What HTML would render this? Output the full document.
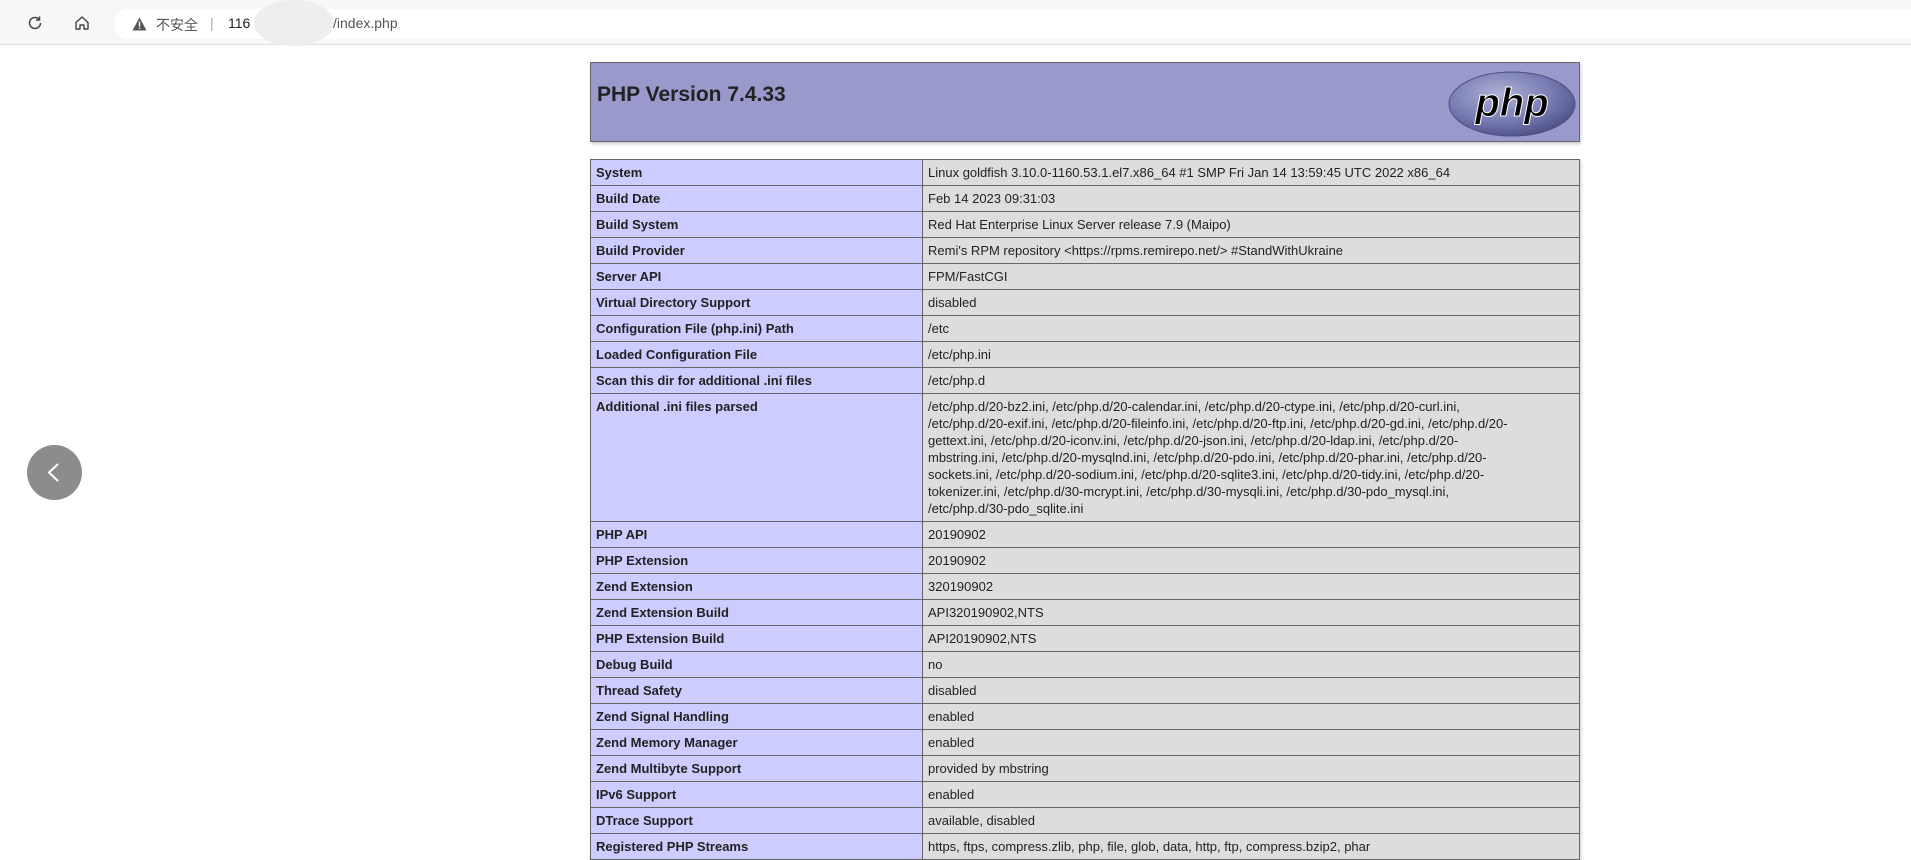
<!DOCTYPE html>
<html><head><meta charset="utf-8"><style>
html,body{margin:0;padding:0;width:1911px;height:851px;overflow:hidden;background:#fff;font-family:"Liberation Sans","Noto Sans CJK SC",sans-serif;}
.bar{position:absolute;left:0;top:0;width:1911px;height:44px;background:#f7f7f7;border-bottom:1px solid #e0e0e0;}
.pill{position:absolute;left:114px;top:9px;width:1820px;height:30px;background:#fff;border-radius:15px;}
.url{position:absolute;top:15px;font-size:14px;color:#333;}
.back{position:absolute;left:27px;top:445px;width:55px;height:55px;border-radius:50%;background:#8c8c8c;}
.hdr{position:absolute;left:590px;top:62px;width:988px;height:78px;background:#99c;border:1px solid #666;box-shadow:1px 2px 3px #ccc;}
.hdr h1{margin:0;position:absolute;left:6px;top:20px;font-size:21px;font-weight:bold;color:#222;}
table{position:absolute;left:590px;top:159px;width:990px;border-collapse:collapse;font-size:13px;color:#222;box-shadow:1px 2px 3px #ccc;}
td{border:1px solid #666;padding:4px 5px;line-height:17px;height:17px;vertical-align:top;white-space:nowrap;}
td.e{background:#ccf;font-weight:bold;width:321px;}
td.v{background:#ddd;}
</style></head><body>
<div class="bar">
<svg style="position:absolute;left:26px;top:14px" width="18" height="18" viewBox="0 0 18 18"><path d="M14.5 9a5.5 5.5 0 1 1-1.6-3.9" fill="none" stroke="#444" stroke-width="1.5"/><path d="M13.5 2.5v3.5h-3.5" fill="none" stroke="#444" stroke-width="1.5"/></svg>
<svg style="position:absolute;left:73px;top:14px" width="18" height="18" viewBox="0 0 18 18"><path d="M3 8.5L9 3l6 5.5V15h-4v-4H7v4H3z" fill="none" stroke="#444" stroke-width="1.4" stroke-linejoin="round"/></svg>
<div class="pill"></div>
<svg style="position:absolute;left:132px;top:17px" width="15" height="14" viewBox="0 0 15 14"><path d="M7.5 0.5L14.5 13.5H0.5z" fill="#555"/><rect x="6.8" y="4.5" width="1.4" height="5" fill="#fff"/><rect x="6.8" y="10.5" width="1.4" height="1.4" fill="#fff"/></svg>
<span class="url" style="left:156px;color:#555">不安全</span>
<span class="url" style="left:210px;color:#aaa">|</span>
<span class="url" style="left:228px;color:#222">116</span>
<div style="position:absolute;left:254px;top:0px;width:80px;height:46px;border-radius:50%;background:#eee;"></div>
<span class="url" style="left:333px;color:#555">/index.php</span>
</div>
<div class="back"><svg width="55" height="55" viewBox="0 0 55 55"><path d="M31 19l-9 8.5 9 8.5" fill="none" stroke="#fff" stroke-width="2"/></svg></div>
<div class="hdr"><h1>PHP Version 7.4.33</h1>
<svg style="position:absolute;left:856px;top:7px" width="130" height="68" viewBox="0 0 130 68"><defs><radialGradient id="g" cx="40%" cy="35%" r="70%"><stop offset="0" stop-color="#aeb2d5"/><stop offset="0.6" stop-color="#777bb3"/><stop offset="1" stop-color="#4c4f83"/></radialGradient></defs><ellipse cx="65" cy="34" rx="63" ry="32" fill="url(#g)" stroke="#4c4f83"/><text x="65" y="46" text-anchor="middle" font-family="Liberation Sans,sans-serif" font-style="italic" font-weight="bold" font-size="40" fill="#000" stroke="#fff" stroke-width="1">php</text></svg>
</div>
<table>
<tr><td class="e">System</td><td class="v">Linux goldfish 3.10.0-1160.53.1.el7.x86_64 #1 SMP Fri Jan 14 13:59:45 UTC 2022 x86_64</td></tr>
<tr><td class="e">Build Date</td><td class="v">Feb 14 2023 09:31:03</td></tr>
<tr><td class="e">Build System</td><td class="v">Red Hat Enterprise Linux Server release 7.9 (Maipo)</td></tr>
<tr><td class="e">Build Provider</td><td class="v">Remi's RPM repository &lt;https://rpms.remirepo.net/&gt; #StandWithUkraine</td></tr>
<tr><td class="e">Server API</td><td class="v">FPM/FastCGI</td></tr>
<tr><td class="e">Virtual Directory Support</td><td class="v">disabled</td></tr>
<tr><td class="e">Configuration File (php.ini) Path</td><td class="v">/etc</td></tr>
<tr><td class="e">Loaded Configuration File</td><td class="v">/etc/php.ini</td></tr>
<tr><td class="e">Scan this dir for additional .ini files</td><td class="v">/etc/php.d</td></tr>
<tr><td class="e">Additional .ini files parsed</td><td class="v">/etc/php.d/20-bz2.ini, /etc/php.d/20-calendar.ini, /etc/php.d/20-ctype.ini, /etc/php.d/20-curl.ini,<br>/etc/php.d/20-exif.ini, /etc/php.d/20-fileinfo.ini, /etc/php.d/20-ftp.ini, /etc/php.d/20-gd.ini, /etc/php.d/20-<br>gettext.ini, /etc/php.d/20-iconv.ini, /etc/php.d/20-json.ini, /etc/php.d/20-ldap.ini, /etc/php.d/20-<br>mbstring.ini, /etc/php.d/20-mysqlnd.ini, /etc/php.d/20-pdo.ini, /etc/php.d/20-phar.ini, /etc/php.d/20-<br>sockets.ini, /etc/php.d/20-sodium.ini, /etc/php.d/20-sqlite3.ini, /etc/php.d/20-tidy.ini, /etc/php.d/20-<br>tokenizer.ini, /etc/php.d/30-mcrypt.ini, /etc/php.d/30-mysqli.ini, /etc/php.d/30-pdo_mysql.ini,<br>/etc/php.d/30-pdo_sqlite.ini</td></tr>
<tr><td class="e">PHP API</td><td class="v">20190902</td></tr>
<tr><td class="e">PHP Extension</td><td class="v">20190902</td></tr>
<tr><td class="e">Zend Extension</td><td class="v">320190902</td></tr>
<tr><td class="e">Zend Extension Build</td><td class="v">API320190902,NTS</td></tr>
<tr><td class="e">PHP Extension Build</td><td class="v">API20190902,NTS</td></tr>
<tr><td class="e">Debug Build</td><td class="v">no</td></tr>
<tr><td class="e">Thread Safety</td><td class="v">disabled</td></tr>
<tr><td class="e">Zend Signal Handling</td><td class="v">enabled</td></tr>
<tr><td class="e">Zend Memory Manager</td><td class="v">enabled</td></tr>
<tr><td class="e">Zend Multibyte Support</td><td class="v">provided by mbstring</td></tr>
<tr><td class="e">IPv6 Support</td><td class="v">enabled</td></tr>
<tr><td class="e">DTrace Support</td><td class="v">available, disabled</td></tr>
<tr><td class="e">Registered PHP Streams</td><td class="v">https, ftps, compress.zlib, php, file, glob, data, http, ftp, compress.bzip2, phar</td></tr>
</table>
</body></html>
